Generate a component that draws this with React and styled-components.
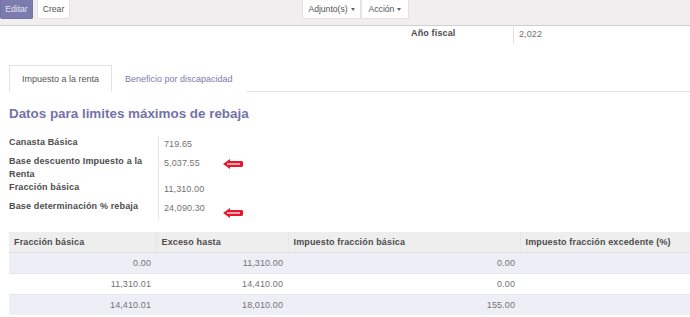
import React from "react";
import styled, { createGlobalStyle } from "styled-components";

const Global = createGlobalStyle`
  html, body { margin: 0; padding: 0; background: #fff; }
  body {
    font-family: "Liberation Sans", Arial, sans-serif;
    font-size: 9px;
    color: #4c4c4c;
  }
`;

const Page = styled.div`
  width: 690px;
  height: 317px;
  overflow: hidden;
  background: #fff;
`;

const ControlPanel = styled.div`
  height: 25px;
  background: #f0eeee;
  border-bottom: 1px solid #cfcfcf;
  display: flex;
  align-items: flex-start;
`;

const Button = styled.div`
  height: 19px;
  box-sizing: border-box;
  display: flex;
  align-items: center;
  justify-content: center;
  font-size: 8.6px;
  width: ${(p) => p.$w}px;
  margin-left: ${(p) => p.$ml || 0}px;
  background: ${(p) => (p.$primary ? "#7c7bad" : "#fff")};
  color: ${(p) => (p.$primary ? "#e4e3f2" : "#555")};
  border: 1px solid ${(p) => (p.$primary ? "#7372a3" : "#e2e2e2")};
  border-top: none;
  border-radius: 0 0 2px 2px;
  gap: 3px;
`;

const Group = styled.div`
  display: flex;
  margin-left: ${(p) => p.$ml}px;
  & > ${Button} { border-radius: 0; }
  & > ${Button} + ${Button} { border-left: 1px solid #e8e8e8; }
`;

const Caret = styled.span`
  width: 0;
  height: 0;
  border-left: 2.5px solid transparent;
  border-right: 2.5px solid transparent;
  border-top: 3px solid #666;
`;

const FiscalRow = styled.div`
  display: grid;
  grid-template-columns: 102px 1fr;
  margin-left: 411px;
  height: 18px;
`;

const Label = styled.div`
  font-weight: bold;
  line-height: 13px;
  color: #4c4c4c;
  letter-spacing: 0.15px;
  padding-top: ${(p) => p.$pt || 0}px;
`;

const Value = styled.div`
  border-left: 1px solid #e4e4e4;
  padding: ${(p) => p.$pt || 1.5}px 0 0 5px;
  line-height: 13px;
  color: #727272;
  letter-spacing: 0.1px;
  display: grid;
  grid-template-columns: 59px auto;
  align-items: start;
`;

const Tabs = styled.div`
  margin: 21px 0 0 9px;
  display: flex;
  border-bottom: 1px solid #e2e2e2;
  height: 26px;
`;

const Tab = styled.div`
  padding: 0 12px;
  display: flex;
  align-items: center;
  box-sizing: border-box;
  color: ${(p) => (p.$active ? "#555" : "#7c7bad")};
  border: 1px solid ${(p) => (p.$active ? "#e2e2e2" : "transparent")};
  border-bottom-color: ${(p) => (p.$active ? "#fff" : "transparent")};
  background: #fff;
  margin-bottom: -1px;
  height: 27px;
`;

const Heading = styled.h2`
  margin: 14px 0 0 9px;
  font-size: 13.4px;
  line-height: 16px;
  font-weight: bold;
  color: #7473a8;
`;

const Fields = styled.div`
  margin: 14px 0 0 9px;
  display: grid;
  grid-template-columns: 149px 1fr;
  grid-auto-rows: minmax(19px, auto);
`;

const Arrow = styled.svg`
  width: 20px;
  height: 10px;
  margin-top: ${(p) => p.$mt || 0}px;
`;

const RedArrow = ({ mt }) => (
  <Arrow $mt={mt} viewBox="0 0 20 10">
    <polygon points="0,5 7,0 7,2 19,2 20,3 20,7 19,8 7,8 7,10" fill="#e8182c" />
    <line x1="4" y1="5" x2="17" y2="5" stroke="#fff" strokeWidth="1.2" />
  </Arrow>
);

const Table = styled.table`
  margin: 13px 0 0 9px;
  width: 681px;
  border-collapse: collapse;
  table-layout: fixed;
`;

const Th = styled.th`
  height: 20px;
  padding: 0 5px;
  text-align: left;
  font-weight: bold;
  background: #eeeeee;
  border-bottom: 1px solid #e0e0e0;
  border-left: ${(p) => (p.$first ? "none" : "1px solid #e6e6e6")};
  color: #4c4c4c;
  letter-spacing: 0.15px;
`;

const Tr = styled.tr`
  background: ${(p) => (p.$odd ? "#eeeef6" : "#fff")};
  border-top: 1px solid #e6e6ee;
`;

const Td = styled.td`
  height: 20px;
  padding: 0 5px 0 5px;
  text-align: right;
  color: #727272;
  letter-spacing: 0.1px;
`;

const rows = [
  ["0.00", "11,310.00", "0.00", ""],
  ["11,310.01", "14,410.00", "0.00", ""],
  ["14,410.01", "18,010.00", "155.00", ""],
];

export default function App() {
  return (
    <Page>
      <Global />
      <ControlPanel>
        <Button $primary $w={33}>Editar</Button>
        <Button $w={33} $ml={4}>Crear</Button>
        <Group $ml={232}>
          <Button $w={59}>Adjunto(s) <Caret /></Button>
          <Button $w={48}>Acción <Caret /></Button>
        </Group>
      </ControlPanel>
      <FiscalRow>
        <Label $pt={1}>Año fiscal</Label>
        <Value $pt={2}>2,022</Value>
      </FiscalRow>
      <Tabs>
        <Tab $active>Impuesto a la renta</Tab>
        <Tab>Beneficio por discapacidad</Tab>
      </Tabs>
      <Heading>Datos para limites máximos de rebaja</Heading>
      <Fields>
        <Label>Canasta Básica</Label>
        <Value><span>719.65</span></Value>
        <Label>Base descuento Impuesto a la<br />Renta</Label>
        <Value>
          <span>5,037.55</span>
          <RedArrow mt={2} />
        </Value>
        <Label>Fracción básica</Label>
        <Value><span>11,310.00</span></Value>
        <Label>Base determinación % rebaja</Label>
        <Value>
          <span>24,090.30</span>
          <RedArrow mt={6} />
        </Value>
      </Fields>
      <Table>
        <colgroup>
          <col style={{ width: 147 }} />
          <col style={{ width: 132 }} />
          <col style={{ width: 232 }} />
          <col style={{ width: 170 }} />
        </colgroup>
        <thead>
          <tr>
            <Th $first>Fracción básica</Th>
            <Th>Exceso hasta</Th>
            <Th>Impuesto fracción básica</Th>
            <Th>Impuesto fracción excedente (%)</Th>
          </tr>
        </thead>
        <tbody>
          {rows.map((r, i) => (
            <Tr key={i} $odd={i % 2 === 0}>
              {r.map((c, j) => (
                <Td key={j}>{c}</Td>
              ))}
            </Tr>
          ))}
        </tbody>
      </Table>
    </Page>
  );
}
